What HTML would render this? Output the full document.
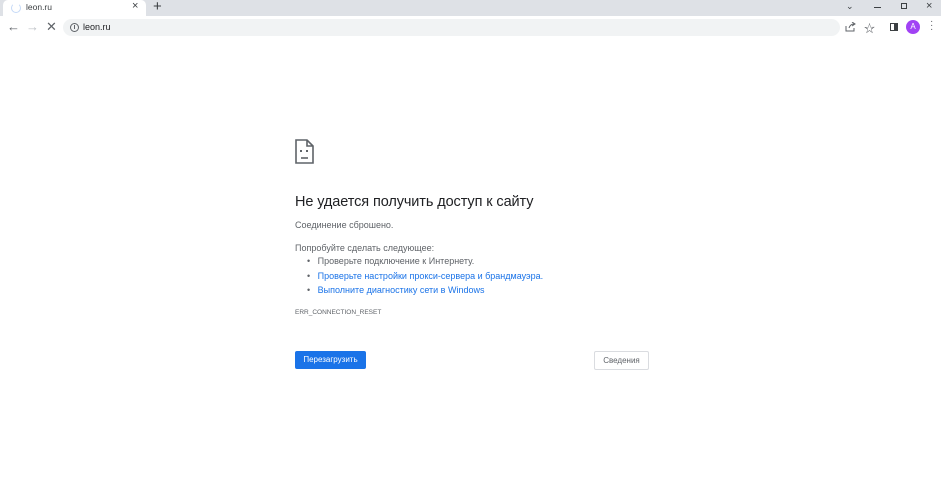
<!DOCTYPE html>
<html><head><meta charset="utf-8"><style>
*{margin:0;padding:0;box-sizing:border-box}
body{width:941px;height:499px;background:#fff;font-family:"Liberation Sans","Noto Sans CJK SC",sans-serif;position:relative;overflow:hidden;color:#202124}
.abs{position:absolute}
.t{font-size:9px;color:#5f6368;white-space:nowrap}
.b{color:#1a73e8}
</style></head><body>
<div class="abs" style="left:0;top:0;width:941px;height:16px;background:#dee1e6"></div>
<div class="abs" style="left:3px;top:0;width:143px;height:17px;background:#fff;border-radius:5px 5px 0 0"></div>
<div class="abs" style="left:11px;top:3px;width:10px;height:10px;border:1.5px solid #c5d9f7;border-top-color:transparent;border-radius:50%"></div>
<div class="abs t" style="left:26px;top:2px;color:#3c4043;font-size:8.5px">leon.ru</div>
<div class="abs" style="left:132px;top:0px;font-size:11px;color:#3c4043">×</div>
<div class="abs" style="left:153px;top:-2px;font-size:15px;color:#3c4043">+</div>
<div class="abs" style="left:846px;top:1px;font-size:9px;color:#3c4043">⌄</div>
<div class="abs" style="left:874px;top:7px;width:7px;height:1px;background:#3c4043"></div>
<div class="abs" style="left:901px;top:3px;width:6px;height:6px;border:1.2px solid #3c4043"></div>
<div class="abs" style="left:926px;top:0px;font-size:11px;color:#3c4043">×</div>
<div class="abs" style="left:0;top:16px;width:941px;height:22px;background:#fff"></div>
<div class="abs" style="left:7px;top:19px;font-size:13px;color:#5f6368">←</div>
<div class="abs" style="left:26px;top:19px;font-size:13px;color:#bdc1c6">→</div>
<div class="abs" style="left:46px;top:19px;font-size:13px;color:#5f6368">✕</div>
<div class="abs" style="left:63px;top:19px;width:777px;height:17px;background:#f1f3f4;border-radius:9px"></div>
<div class="abs" style="left:70px;top:23px;width:9px;height:9px;border:1px solid #5f6368;border-radius:50%"></div>
<div class="abs" style="left:74px;top:25px;width:1px;height:4px;background:#5f6368"></div>
<div class="abs t" style="left:83px;top:22px;color:#202124;font-size:9px">leon.ru</div>
<svg class="abs" style="left:845px;top:22px" width="11" height="10" viewBox="0 0 11 10"><path d="M1 4V9H9V6 M4 6C5 3 7 2 9 2 M7 0L10 2L7 4" fill="none" stroke="#5f6368" stroke-width="1"/></svg>
<div class="abs" style="left:864px;top:20px;font-size:11px;color:#5f6368">☆</div>
<div class="abs" style="left:890px;top:23px;width:8px;height:8px;border:1.2px solid #3c4043;border-right-width:4px"></div>
<div class="abs" style="left:906px;top:20px;width:14px;height:14px;border-radius:50%;background:#a142f4;color:#fff;font-size:8px;text-align:center;line-height:14px">A</div>
<div class="abs" style="left:930px;top:20px;font-size:10px;color:#5f6368;line-height:4px">·<br>·<br>·</div>

<svg class="abs" style="left:295px;top:139px" width="20" height="26" viewBox="0 0 20 26"><path d="M1 1H12L18 7V24H1Z M12 1V7H18" fill="none" stroke="#5f6368" stroke-width="1.6"/><rect x="5" y="11" width="2" height="2" fill="#5f6368"/><rect x="11" y="11" width="2" height="2" fill="#5f6368"/><path d="M6 19H13" stroke="#5f6368" stroke-width="1.6"/></svg>
<div class="abs" style="left:295px;top:194px;font-size:14.5px;color:#202124;white-space:nowrap;letter-spacing:-0.1px">Не удается получить доступ к сайту</div>
<div class="abs t" style="left:295px;top:220px">Соединение сброшено.</div>
<div class="abs t" style="left:295px;top:243px">Попробуйте сделать следующее:</div>
<div class="abs t" style="left:307px;top:256px">•&nbsp;&nbsp; Проверьте подключение к Интернету.</div>
<div class="abs t" style="left:307px;top:271px">•&nbsp;&nbsp; <span class="b">Проверьте настройки прокси-сервера и брандмауэра.</span></div>
<div class="abs t" style="left:307px;top:285px">•&nbsp;&nbsp; <span class="b">Выполните диагностику сети в Windows</span></div>
<div class="abs t" style="left:295px;top:309px;font-size:6.5px">ERR_CONNECTION_RESET</div>
<div class="abs" style="left:295px;top:351px;width:71px;height:18px;background:#1a73e8;border-radius:2px;color:#fff;font-size:8px;text-align:center;line-height:18px">Перезагрузить</div>
<div class="abs" style="left:594px;top:351px;width:55px;height:19px;border:1px solid #dadce0;border-radius:2px;color:#5f6368;font-size:8px;text-align:center;line-height:17px">Сведения</div>
</body></html>
